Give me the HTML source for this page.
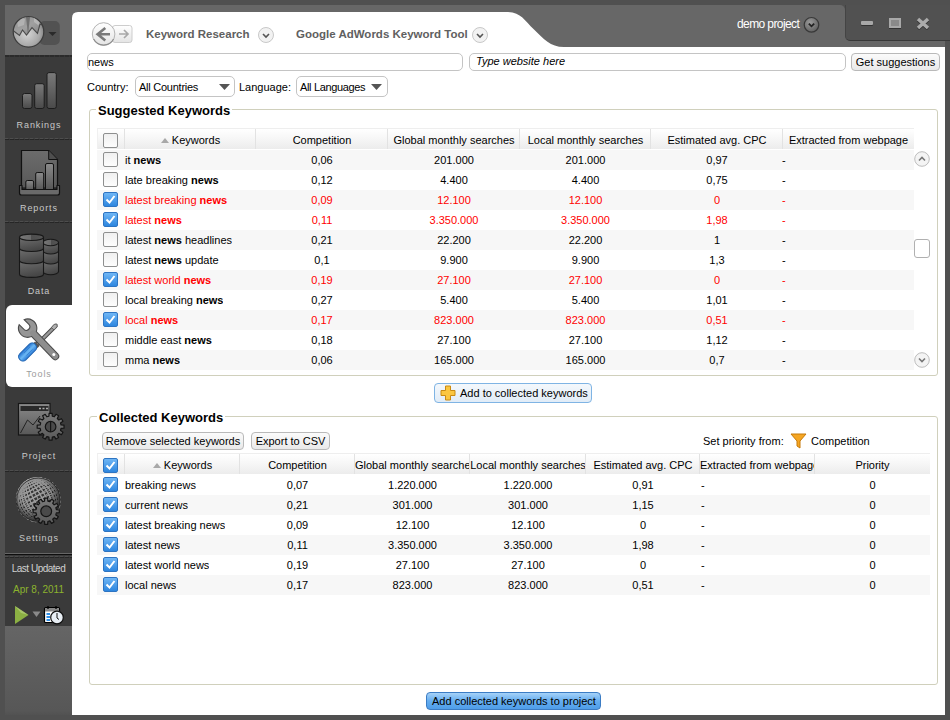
<!DOCTYPE html><html><head><meta charset="utf-8"><style>
*{box-sizing:border-box;margin:0;padding:0}
html,body{width:950px;height:720px;overflow:hidden;background:#505050;font-family:"Liberation Sans",sans-serif;font-size:11px;color:#000}
.abs{position:absolute}
.t{position:absolute;white-space:nowrap;line-height:13px}
.sb{position:absolute;left:5px;width:67px;color:#c8c8c8;font-size:9px;letter-spacing:0.9px;text-align:center;line-height:12px;white-space:nowrap;text-indent:0.9px}
.sep{position:absolute;left:5px;width:67px;height:1px;border-top:1px dashed #2a2a2a}
.inp{position:absolute;background:#fff;border:1px solid #c4c4c4;border-radius:5px}
.btn{position:absolute;border:1px solid #b9b9b9;border-radius:4px;background:linear-gradient(#fbfbfb,#e9e9e9);text-align:center;line-height:17px;white-space:nowrap}
.grp{position:absolute;border:1px solid #d0d0bc;border-radius:3px}
.gt{position:absolute;background:#fff;font-weight:bold;font-size:13px;line-height:15px;padding:0 2px 0 2px;white-space:nowrap}
.hdr{position:absolute;height:21px;background:linear-gradient(#ffffff 0%,#f6f6f6 50%,#ececec 100%);border-top:1px solid #eeeeee;border-left:1px solid #f0f0f0}
.hc{position:absolute;top:0;height:21px;line-height:21px;padding-top:2px;text-align:center;white-space:nowrap;overflow:hidden}
.hs{position:absolute;width:1px;height:20px;background:#e2e2e2}
.row{position:absolute;height:20px}
.g{background:#f7f7f7}
.c{position:absolute;top:0;line-height:20px;text-align:center;white-space:nowrap;overflow:hidden}
.r{color:#ff0000}
.cb{position:absolute;width:15px;height:15px;border:1px solid #8e8f8f;border-radius:2px;background:linear-gradient(#f0f0f0,#fdfdfd)}
.cbk{position:absolute;width:15px;height:15px;border-radius:2px;background:linear-gradient(#6fb6f5,#2d86df);border:1px solid #2d74c2}
</style></head><body>
<div class="abs" style="left:5px;top:5px;width:840px;height:42px;background:#676767;border-top-right-radius:5px"></div>
<div class="abs" style="left:838px;top:25px;width:107px;height:22px;background:#676767"></div>
<div class="abs" style="left:845px;top:0;width:105px;height:5px;background:#505050"></div>
<div class="abs" style="left:845px;top:5px;width:105px;height:36px;background:#515151;border-bottom-left-radius:5px;border-left:1px solid #444;border-bottom:1px solid #383838"></div>
<div class="abs" style="left:861px;top:21px;width:12px;height:4px;background:#a8a8a8;border-radius:1px;box-shadow:0 1px 0 #333"></div>
<div class="abs" style="left:889px;top:18px;width:12px;height:10px;background:#8a8a8a;border:2px solid #a8a8a8;box-shadow:0 1px 0 #333"></div>
<svg class="abs" style="left:916px;top:17px" width="14" height="13"><path d="M2 2 L12 11 M12 2 L2 11" stroke="#333" stroke-width="3.5" transform="translate(0,1)"/><path d="M2 2 L12 11 M12 2 L2 11" stroke="#ababab" stroke-width="3.5"/></svg>
<div class="t" style="left:737px;top:18px;color:#fff;font-size:12px;letter-spacing:-0.6px">demo project</div>
<svg class="abs" style="left:803px;top:16px" width="17" height="17"><defs><radialGradient id="dp" cx="0.4" cy="0.35" r="0.7"><stop offset="0" stop-color="#9a9a9a"/><stop offset="1" stop-color="#5e5e5e"/></radialGradient></defs><circle cx="8.5" cy="8.8" r="7.3" fill="url(#dp)" stroke="#383838" stroke-width="1.2"/><path d="M5.8 7.6 L8.5 10.3 L11.2 7.6" stroke="#222" stroke-width="1.8" fill="none"/></svg>
<div class="abs" style="left:5px;top:5px;width:67px;height:50px;background:#676767"></div>
<div class="abs" style="left:5px;top:55px;width:67px;height:571px;background:#3a3a3a"></div>
<div class="abs" style="left:5px;top:626px;width:67px;height:89px;background:linear-gradient(#656565,#575757 95%,#525252)"></div>
<div class="abs" style="left:5px;top:55px;width:67px;height:2px;background:repeating-linear-gradient(90deg,#2a2a2a 0 4px,#333 4px 5px)"></div>
<div class="abs" style="left:5px;top:138px;width:67px;height:1px;background:repeating-linear-gradient(90deg,#4e4e4e 0 3px,#404040 3px 5px)"></div>
<div class="abs" style="left:5px;top:139px;width:67px;height:1px;background:repeating-linear-gradient(90deg,#262626 0 4px,#333 4px 5px)"></div>
<div class="abs" style="left:5px;top:221px;width:67px;height:1px;background:repeating-linear-gradient(90deg,#4e4e4e 0 3px,#404040 3px 5px)"></div>
<div class="abs" style="left:5px;top:222px;width:67px;height:1px;background:repeating-linear-gradient(90deg,#262626 0 4px,#333 4px 5px)"></div>
<div class="abs" style="left:5px;top:470px;width:67px;height:1px;background:repeating-linear-gradient(90deg,#4e4e4e 0 3px,#404040 3px 5px)"></div>
<div class="abs" style="left:5px;top:471px;width:67px;height:1px;background:repeating-linear-gradient(90deg,#262626 0 4px,#333 4px 5px)"></div>
<div class="abs" style="left:5px;top:553px;width:67px;height:1px;background:#666"></div>
<div class="abs" style="left:5px;top:554px;width:67px;height:1px;background:#0e0e0e"></div>
<div class="abs" style="left:5px;top:555.5px;width:67px;height:1px;background:repeating-linear-gradient(90deg,#4e4e4e 0 3px,#404040 3px 5px)"></div>
<div class="abs" style="left:5px;top:556.5px;width:67px;height:1px;background:repeating-linear-gradient(90deg,#262626 0 4px,#333 4px 5px)"></div>
<svg class="abs" style="left:5px;top:5px" width="67" height="50"><defs><radialGradient id="gl" cx="0.45" cy="0.55" r="0.6"><stop offset="0" stop-color="#d6d6d6"/><stop offset="0.7" stop-color="#a8a8a8"/><stop offset="1" stop-color="#7a7a7a"/></radialGradient><linearGradient id="gtop" x1="0" y1="0" x2="1" y2="1"><stop offset="0" stop-color="#8a8a8a"/><stop offset="0.5" stop-color="#a0a0a0"/><stop offset="1" stop-color="#7c7c7c"/></linearGradient><clipPath id="gc"><circle cx="23.5" cy="26.8" r="15.2"/></clipPath></defs><rect x="34.5" y="16" width="20.3" height="24" rx="5" fill="#525252"/><path d="M43.5 27 H51.5 L47.5 31 Z" fill="#2a2a2a"/><circle cx="23.5" cy="26.8" r="15.3" fill="url(#gl)"/><g clip-path="url(#gc)"><path d="M6 10 H42 V22 L35 19 L32.5 28.5 L27 22.7 L21.5 30 L17.5 25 L14.5 30.5 L6 24 Z" fill="url(#gtop)"/><path d="M12 16 Q16 12 20 14 L19 20 L13 22 Z" fill="#b8b8b8" opacity="0.8"/><path d="M29 13 Q35 13 37 18 L33 20 L29 17 Z" fill="#bcbcbc" opacity="0.8"/><path d="M21 12 L23 30 L25 12 Z" fill="#5e5e5e" opacity="0.7"/><path d="M6 24 L14.5 30.5 L17.5 25 L21.5 30 L27 22.7 L32.5 28.5 L35 19 L42 22" stroke="#4a4a4a" stroke-width="1.1" fill="none"/></g><circle cx="23.5" cy="26.8" r="15.3" fill="none" stroke="#3c3c3c" stroke-width="1.2"/></svg>
<svg class="abs" style="left:5px;top:55px" width="67" height="83"><defs><linearGradient id="bar" x1="0" y1="0" x2="0" y2="1"><stop offset="0" stop-color="#7a7a7a"/><stop offset="1" stop-color="#4a4a4a"/></linearGradient></defs><rect x="17.5" y="38.5" width="9.5" height="15" rx="2" fill="url(#bar)" stroke="#1c1c1c"/><rect x="29.7" y="28.7" width="9.5" height="24.8" rx="2" fill="url(#bar)" stroke="#1c1c1c"/><rect x="42" y="17.6" width="9.3" height="35.9" rx="2" fill="url(#bar)" stroke="#1c1c1c"/></svg>
<div class="sb" style="top:118.7px">Rankings</div>
<svg class="abs" style="left:5px;top:138px" width="67" height="83"><defs><linearGradient id="doc" x1="0" y1="0" x2="0" y2="1"><stop offset="0" stop-color="#6c6c6c"/><stop offset="1" stop-color="#585858"/></linearGradient></defs><path d="M16.5 12.5 H43.7 L52.5 21.5 V50 H16.5 Z" fill="url(#doc)" stroke="#111" stroke-width="1.2"/><path d="M43.7 12.5 V21.5 H52.5" fill="#4e4e4e" stroke="#111" stroke-width="1"/><defs><linearGradient id="bar2" x1="0" y1="0" x2="0" y2="1"><stop offset="0" stop-color="#8a8a8a"/><stop offset="1" stop-color="#555"/></linearGradient></defs><rect x="20.8" y="42.5" width="7.8" height="10" rx="1.5" fill="url(#bar2)" stroke="#111"/><rect x="30.7" y="34.5" width="8" height="18" rx="1.5" fill="url(#bar2)" stroke="#111"/><rect x="40.5" y="25.5" width="8" height="27" rx="1.5" fill="url(#bar2)" stroke="#111"/><path d="M14.5 47.5 H17 V51.5 H52 V47.5 H54.5 V55 Q54.5 57 52.5 57 H16.5 Q14.5 57 14.5 55 Z" fill="#6a6a6a" stroke="#111" stroke-width="1.2" stroke-linejoin="round"/></svg>
<div class="sb" style="top:201.6px">Reports</div>
<svg class="abs" style="left:5px;top:221px" width="67" height="84"><defs><linearGradient id="seg" x1="0" y1="0" x2="0.3" y2="1"><stop offset="0" stop-color="#707070"/><stop offset="1" stop-color="#464646"/></linearGradient><linearGradient id="ctop" x1="0" y1="0" x2="1" y2="0"><stop offset="0" stop-color="#777"/><stop offset="0.5" stop-color="#6a6a6a"/><stop offset="0.5" stop-color="#4e4e4e"/><stop offset="1" stop-color="#555"/></linearGradient></defs><path d="M38 39.8 V50.5 A7.75 3.2 0 0 0 53.5 50.5 V39.8 Z" fill="url(#seg)" stroke="#181818" stroke-width="1.1"/><path d="M38 29.8 V39.8 A7.75 3.2 0 0 0 53.5 39.8 V29.8 Z" fill="url(#seg)" stroke="#181818" stroke-width="1.1"/><path d="M38 21.5 V29.8 A7.75 3.2 0 0 0 53.5 29.8 V21.5 Z" fill="url(#seg)" stroke="#181818" stroke-width="1.1"/><ellipse cx="45.75" cy="21.5" rx="7.75" ry="3.2" fill="url(#ctop)" stroke="#181818" stroke-width="1.1"/><path d="M14.5 39.5 V53.2 A12.0 3.2 0 0 0 38.5 53.2 V39.5 Z" fill="url(#seg)" stroke="#181818" stroke-width="1.1"/><path d="M14.5 27.3 V39.5 A12.0 3.2 0 0 0 38.5 39.5 V27.3 Z" fill="url(#seg)" stroke="#181818" stroke-width="1.1"/><path d="M14.5 16.3 V27.3 A12.0 3.2 0 0 0 38.5 27.3 V16.3 Z" fill="url(#seg)" stroke="#181818" stroke-width="1.1"/><ellipse cx="26.5" cy="16.3" rx="12.0" ry="3.2" fill="url(#ctop)" stroke="#181818" stroke-width="1.1"/></svg>
<div class="sb" style="top:284.8px">Data</div>
<div class="abs" style="left:6px;top:305px;width:66px;height:82px;background:#fff;border-radius:6px 0 0 6px"></div>
<svg class="abs" style="left:12px;top:312px" width="55" height="55"><defs><linearGradient id="blu" x1="0" y1="0" x2="1" y2="0"><stop offset="0" stop-color="#1f6fcf"/><stop offset="0.5" stop-color="#6cb8f4"/><stop offset="1" stop-color="#2a7ad6"/></linearGradient></defs><path d="M43.5 14 L25 32.5" stroke="#444" stroke-width="4.2" stroke-linecap="round"/><path d="M43.5 14 L25 32.5" stroke="#9a9a9a" stroke-width="2.4" stroke-linecap="round"/><path d="M39.5 15.5 Q42 11 45 12 Q46.5 14.5 42 18 Z" fill="#b0b0b0" stroke="#555" stroke-width="0.8"/><path d="M21.5 31 L26 35.5" stroke="#555" stroke-width="4.5"/><rect x="-4.3" y="-10.8" width="8.6" height="21.6" rx="4" transform="translate(15.6 40) rotate(45)" fill="url(#blu)" stroke="#2063b0" stroke-width="1"/><path d="M13.5 39.5 L19.5 33.5 M16 42 L22 36" stroke="#2a6fc0" stroke-width="0.8" opacity="0.7" transform="translate(-1.5 1.5)"/><path d="M20 20 L43.3 44.3" stroke="#4a4a4a" stroke-width="7.8" stroke-linecap="round"/><path d="M12.61 7.67 L17.41 12.47 A3.5 3.5 0 0 1 12.47 17.41 L7.67 12.61 A9.2 9.2 0 1 0 12.61 7.67 Z" fill="#969696" stroke="#4a4a4a" stroke-width="1.1" transform="translate(-0.5 0)"/><path d="M21 21 L43.3 44.3" stroke="#8e8e8e" stroke-width="5.8" stroke-linecap="round"/><circle cx="41.8" cy="42.6" r="1.5" fill="#fff"/></svg>
<div class="sb" style="top:367.9px;color:#9c9c9c">Tools</div>
<svg class="abs" style="left:12px;top:395px" width="55" height="55"><defs><linearGradient id="win" x1="0" y1="0" x2="0" y2="1"><stop offset="0" stop-color="#8a8a8a"/><stop offset="1" stop-color="#585858"/></linearGradient><linearGradient id="gearg" x1="0" y1="0" x2="0" y2="1"><stop offset="0" stop-color="#7a7a7a"/><stop offset="1" stop-color="#5a5a5a"/></linearGradient></defs><rect x="6.5" y="8.5" width="31.5" height="31.5" fill="url(#win)" stroke="#161616" stroke-width="1.2"/><rect x="8.5" y="11" width="28" height="5" fill="#2a2a2a"/><path d="M27 13.5 H29 M30.5 13.5 H32.5 M34 13.5 H36" stroke="#aaa" stroke-width="1.5"/><path d="M8.5 38 L15.5 25 L21 30 L28 21" stroke="#222" stroke-width="1" fill="none"/><path d="M49.06,29.99 L52.02,30.22 L52.02,33.18 L49.06,33.41 L48.52,35.45 L50.96,37.13 L49.48,39.69 L46.80,38.41 L45.31,39.90 L46.59,42.58 L44.03,44.06 L42.35,41.62 L40.31,42.16 L40.08,45.12 L37.12,45.12 L36.89,42.16 L34.85,41.62 L33.17,44.06 L30.61,42.58 L31.89,39.90 L30.40,38.41 L27.72,39.69 L26.24,37.13 L28.68,35.45 L28.14,33.41 L25.18,33.18 L25.18,30.22 L28.14,29.99 L28.68,27.95 L26.24,26.27 L27.72,23.71 L30.40,24.99 L31.89,23.50 L30.61,20.82 L33.17,19.34 L34.85,21.78 L36.89,21.24 L37.12,18.28 L40.08,18.28 L40.31,21.24 L42.35,21.78 L44.03,19.34 L46.59,20.82 L45.31,23.50 L46.80,24.99 L49.48,23.71 L50.96,26.27 L48.52,27.95 Z" fill="url(#gearg)" stroke="#141414" stroke-width="1.2" stroke-linejoin="round"/><circle cx="38.6" cy="31.7" r="5.3" fill="#4a4a4a" stroke="#141414" stroke-width="1.2"/><path d="M38.6 26.4 V37" stroke="#161616" stroke-width="1.2"/></svg>
<div class="sb" style="top:449.9px">Project</div>
<svg class="abs" style="left:10px;top:474px" width="56" height="56"><defs><radialGradient id="sph" cx="0.5" cy="0.4" r="0.6"><stop offset="0" stop-color="#3a3a3a"/><stop offset="1" stop-color="#2a2a2a"/></radialGradient><radialGradient id="shl" cx="0.42" cy="0.38" r="0.62"><stop offset="0" stop-color="#000" stop-opacity="0"/><stop offset="0.55" stop-color="#000" stop-opacity="0.1"/><stop offset="0.9" stop-color="#000" stop-opacity="0.6"/><stop offset="1" stop-color="#000" stop-opacity="0.75"/></radialGradient></defs><circle cx="28.4" cy="25.7" r="22" fill="url(#sph)"/><g transform="translate(28.4 25.7) rotate(-28)" fill="none" stroke="#a4a4a4" stroke-width="1.05"><ellipse cx="0" cy="0" rx="21.16" ry="22"/><ellipse cx="0" cy="0" rx="19.69" ry="22"/><ellipse cx="0" cy="0" rx="17.56" ry="22"/><ellipse cx="0" cy="0" rx="14.82" ry="22"/><ellipse cx="0" cy="0" rx="11.58" ry="22"/><ellipse cx="0" cy="0" rx="7.95" ry="22"/><ellipse cx="0" cy="0" rx="4.04" ry="22"/><path d="M0 -22 V22" /><ellipse cx="0" cy="0" rx="4.04" ry="22"/><ellipse cx="0" cy="0" rx="7.95" ry="22"/><ellipse cx="0" cy="0" rx="11.58" ry="22"/><ellipse cx="0" cy="0" rx="14.82" ry="22"/><ellipse cx="0" cy="0" rx="17.56" ry="22"/><ellipse cx="0" cy="0" rx="19.69" ry="22"/><ellipse cx="0" cy="0" rx="21.16" ry="22"/><ellipse cx="0" cy="-21.16" rx="6.02" ry="1.08"/><ellipse cx="0" cy="-19.69" rx="9.81" ry="1.77"/><ellipse cx="0" cy="-17.56" rx="13.26" ry="2.39"/><ellipse cx="0" cy="-14.82" rx="16.26" ry="2.93"/><ellipse cx="0" cy="-11.58" rx="18.70" ry="3.37"/><ellipse cx="0" cy="-7.95" rx="20.51" ry="3.69"/><ellipse cx="0" cy="-4.04" rx="21.63" ry="3.89"/><ellipse cx="0" cy="0.00" rx="22.00" ry="3.96"/><ellipse cx="0" cy="4.04" rx="21.63" ry="3.89"/><ellipse cx="0" cy="7.95" rx="20.51" ry="3.69"/><ellipse cx="0" cy="11.58" rx="18.70" ry="3.37"/><ellipse cx="0" cy="14.82" rx="16.26" ry="2.93"/><ellipse cx="0" cy="17.56" rx="13.26" ry="2.39"/><ellipse cx="0" cy="19.69" rx="9.81" ry="1.77"/><ellipse cx="0" cy="21.16" rx="6.02" ry="1.08"/></g><circle cx="28.4" cy="25.7" r="22" fill="url(#shl)"/><circle cx="28.4" cy="25.7" r="21.7" fill="none" stroke="#1e1e1e" stroke-width="0.8"/><path d="M46.36,35.64 L49.32,35.85 L49.32,38.75 L46.36,38.96 L45.84,40.94 L48.29,42.61 L46.84,45.11 L44.17,43.82 L42.72,45.27 L44.01,47.94 L41.51,49.39 L39.84,46.94 L37.86,47.46 L37.65,50.42 L34.75,50.42 L34.54,47.46 L32.56,46.94 L30.89,49.39 L28.39,47.94 L29.68,45.27 L28.23,43.82 L25.56,45.11 L24.11,42.61 L26.56,40.94 L26.04,38.96 L23.08,38.75 L23.08,35.85 L26.04,35.64 L26.56,33.66 L24.11,31.99 L25.56,29.49 L28.23,30.78 L29.68,29.33 L28.39,26.66 L30.89,25.21 L32.56,27.66 L34.54,27.14 L34.75,24.18 L37.65,24.18 L37.86,27.14 L39.84,27.66 L41.51,25.21 L44.01,26.66 L42.72,29.33 L44.17,30.78 L46.84,29.49 L48.29,31.99 L45.84,33.66 Z" fill="url(#gearg)" stroke="#141414" stroke-width="1.2" stroke-linejoin="round"/><circle cx="36.2" cy="37.3" r="5.4" fill="#4a4a4a" stroke="#141414" stroke-width="1.2"/></svg>
<div class="sb" style="top:532.1px">Settings</div>
<div class="t" style="left:5px;width:67px;top:562.5px;text-align:center;color:#d0d0d0;font-size:10px;line-height:12px;letter-spacing:-0.5px">Last Updated</div>
<div class="t" style="left:5px;width:67px;top:583.8px;text-align:center;color:#8cb32e;font-size:10px;line-height:12px;letter-spacing:0">Apr 8, 2011</div>
<svg class="abs" style="left:10px;top:600px" width="56" height="26"><path d="M5 6 L18.5 15 L5 24 Z" fill="#8bb043"/><path d="M5 6 L18.5 15 L11 13 Z" fill="#b5cf7a" opacity="0.7"/><path d="M22.5 11.5 H30.5 L26.5 17 Z" fill="#8a8a8a"/><rect x="34.5" y="7.5" width="15" height="15" rx="1" fill="#fff" stroke="#000" stroke-width="1.2"/><rect x="35" y="8" width="14" height="3.5" fill="#888"/><path d="M38 6 V9 M46 6 V9" stroke="#000" stroke-width="1.3"/><path d="M36.5 14 H40 M36.5 17 H40 M36.5 20 H40" stroke="#2f8fe6" stroke-width="1.8"/><circle cx="47" cy="17.5" r="6.3" fill="#e8eef4" stroke="#111" stroke-width="1.2"/><path d="M47 13 V18 L49 19.5" stroke="#111" stroke-width="1" fill="none"/></svg>
<div class="abs" style="left:72px;top:47px;width:873px;height:668px;background:#fff"></div>
<svg class="abs" style="left:72px;top:12px" width="500" height="36"><path d="M0 36 V6 Q0 0 6 0 H434 C449 0 452 8 462 17.5 C472 27 478 35 492 35 L502 35 L502 36 Z" fill="#fff"/></svg>
<svg class="abs" style="left:91px;top:20px" width="44" height="28"><defs><linearGradient id="bk" x1="0" y1="0" x2="0" y2="1"><stop offset="0" stop-color="#ffffff"/><stop offset="1" stop-color="#e4e4e4"/></linearGradient></defs><rect x="21.5" y="5.5" width="19.5" height="17" rx="2.5" fill="url(#bk)" stroke="#cdcdcd"/><path d="M28 14 H36.5 M33 10 L37 14 L33 18" stroke="#a8a8a8" stroke-width="1.7" fill="none"/><circle cx="12.6" cy="14" r="11.3" fill="url(#bk)" stroke="#b4b4b4"/><path d="M2.6 19 A11.3 11.3 0 0 0 22.6 19" stroke="#8e8e8e" stroke-width="1.2" fill="none"/><path d="M7 14.2 H19 M14.3 8 L6.6 14.2 L14.3 20.4" stroke="#7a7a7a" stroke-width="2.6" fill="none"/></svg>
<div class="t" style="left:146px;top:28px;color:#606060;font-weight:bold;font-size:11.5px">Keyword Research</div>
<div class="t" style="left:296px;top:28px;color:#606060;font-weight:bold;font-size:11.5px">Google AdWords Keyword Tool</div>
<svg class="abs" style="left:258px;top:27px" width="16" height="16"><circle cx="8" cy="8" r="7.5" fill="#f2f2f2" stroke="#c8c8c8"/><path d="M5 7 L8 10 L11 7" stroke="#555" stroke-width="1.6" fill="none"/></svg>
<svg class="abs" style="left:472px;top:27px" width="16" height="16"><circle cx="8" cy="8" r="7.5" fill="#f2f2f2" stroke="#c8c8c8"/><path d="M5 7 L8 10 L11 7" stroke="#555" stroke-width="1.6" fill="none"/></svg>
<div class="inp" style="left:87px;top:53px;width:376px;height:18px"></div>
<div class="t" style="left:88px;top:56px">news</div>
<div class="inp" style="left:469px;top:53px;width:377px;height:18px"></div>
<div class="t" style="left:476px;top:55px;font-style:italic">Type website here</div>
<div class="btn" style="left:851px;top:53px;width:89px;height:18px">Get suggestions</div>
<div class="t" style="left:87px;top:81px">Country:</div>
<div class="inp" style="left:135px;top:76px;width:100px;height:21px"></div>
<div class="t" style="left:139px;top:81px;letter-spacing:-0.25px">All Countries</div>
<svg class="abs" style="left:219px;top:84px" width="11" height="6"><path d="M0 0 H11 L5.5 6 Z" fill="#555"/></svg>
<div class="t" style="left:239px;top:81px">Language:</div>
<div class="inp" style="left:296px;top:76px;width:92px;height:21px"></div>
<div class="t" style="left:300px;top:81px;letter-spacing:-0.35px">All Languages</div>
<svg class="abs" style="left:371px;top:84px" width="11" height="6"><path d="M0 0 H11 L5.5 6 Z" fill="#555"/></svg>
<div class="grp" style="left:89px;top:109px;width:849px;height:267px"></div>
<div class="gt" style="left:96px;top:103px">Suggested Keywords</div>
<div class="hdr" style="left:97px;top:128px;width:817px"></div>
<div class="hs" style="left:124px;top:129px"></div>
<div class="hc" style="left:125px;top:128px;width:131px"><span style="display:inline-block;width:0;height:0;border-left:4px solid transparent;border-right:4px solid transparent;border-bottom:5px solid #a8a8a8;margin-right:3px;vertical-align:1px"></span>Keywords</div>
<div class="hs" style="left:255px;top:129px"></div>
<div class="hc" style="left:256px;top:128px;width:132px">Competition</div>
<div class="hs" style="left:387px;top:129px"></div>
<div class="hc" style="left:388px;top:128px;width:132px">Global monthly searches</div>
<div class="hs" style="left:519px;top:129px"></div>
<div class="hc" style="left:520px;top:128px;width:131px">Local monthly searches</div>
<div class="hs" style="left:650px;top:129px"></div>
<div class="hc" style="left:651px;top:128px;width:132px">Estimated avg. CPC</div>
<div class="hs" style="left:782px;top:129px"></div>
<div class="hc" style="left:783px;top:128px;width:131px">Extracted from webpage</div>
<div class="cb" style="left:103px;top:133px"></div>
<div class="row g" style="left:97px;top:150px;width:817px"><div class="c" style="left:28px;text-align:left">it <b>news</b></div><div class="c" style="left:159px;width:132px">0,06</div><div class="c" style="left:291px;width:132px">201.000</div><div class="c" style="left:423px;width:131px">201.000</div><div class="c" style="left:554px;width:132px">0,97</div><div class="c" style="left:685px;text-align:left">-</div></div>
<div class="cb" style="left:103px;top:152px"></div>
<div class="row" style="left:97px;top:170px;width:817px"><div class="c" style="left:28px;text-align:left">late breaking <b>news</b></div><div class="c" style="left:159px;width:132px">0,12</div><div class="c" style="left:291px;width:132px">4.400</div><div class="c" style="left:423px;width:131px">4.400</div><div class="c" style="left:554px;width:132px">0,75</div><div class="c" style="left:685px;text-align:left">-</div></div>
<div class="cb" style="left:103px;top:172px"></div>
<div class="row g r" style="left:97px;top:190px;width:817px"><div class="c" style="left:28px;text-align:left">latest breaking <b>news</b></div><div class="c" style="left:159px;width:132px">0,09</div><div class="c" style="left:291px;width:132px">12.100</div><div class="c" style="left:423px;width:131px">12.100</div><div class="c" style="left:554px;width:132px">0</div><div class="c" style="left:685px;text-align:left">-</div></div>
<div class="cbk" style="left:103px;top:192px"></div>
<svg class="abs" style="left:103px;top:192px" width="15" height="15"><path d="M3.5 7.5 L6.5 10.5 L11.5 4" stroke="#fff" stroke-width="2" fill="none"/></svg>
<div class="row r" style="left:97px;top:210px;width:817px"><div class="c" style="left:28px;text-align:left">latest <b>news</b></div><div class="c" style="left:159px;width:132px">0,11</div><div class="c" style="left:291px;width:132px">3.350.000</div><div class="c" style="left:423px;width:131px">3.350.000</div><div class="c" style="left:554px;width:132px">1,98</div><div class="c" style="left:685px;text-align:left">-</div></div>
<div class="cbk" style="left:103px;top:212px"></div>
<svg class="abs" style="left:103px;top:212px" width="15" height="15"><path d="M3.5 7.5 L6.5 10.5 L11.5 4" stroke="#fff" stroke-width="2" fill="none"/></svg>
<div class="row g" style="left:97px;top:230px;width:817px"><div class="c" style="left:28px;text-align:left">latest <b>news</b> headlines</div><div class="c" style="left:159px;width:132px">0,21</div><div class="c" style="left:291px;width:132px">22.200</div><div class="c" style="left:423px;width:131px">22.200</div><div class="c" style="left:554px;width:132px">1</div><div class="c" style="left:685px;text-align:left">-</div></div>
<div class="cb" style="left:103px;top:232px"></div>
<div class="row" style="left:97px;top:250px;width:817px"><div class="c" style="left:28px;text-align:left">latest <b>news</b> update</div><div class="c" style="left:159px;width:132px">0,1</div><div class="c" style="left:291px;width:132px">9.900</div><div class="c" style="left:423px;width:131px">9.900</div><div class="c" style="left:554px;width:132px">1,3</div><div class="c" style="left:685px;text-align:left">-</div></div>
<div class="cb" style="left:103px;top:252px"></div>
<div class="row g r" style="left:97px;top:270px;width:817px"><div class="c" style="left:28px;text-align:left">latest world <b>news</b></div><div class="c" style="left:159px;width:132px">0,19</div><div class="c" style="left:291px;width:132px">27.100</div><div class="c" style="left:423px;width:131px">27.100</div><div class="c" style="left:554px;width:132px">0</div><div class="c" style="left:685px;text-align:left">-</div></div>
<div class="cbk" style="left:103px;top:272px"></div>
<svg class="abs" style="left:103px;top:272px" width="15" height="15"><path d="M3.5 7.5 L6.5 10.5 L11.5 4" stroke="#fff" stroke-width="2" fill="none"/></svg>
<div class="row" style="left:97px;top:290px;width:817px"><div class="c" style="left:28px;text-align:left">local breaking <b>news</b></div><div class="c" style="left:159px;width:132px">0,27</div><div class="c" style="left:291px;width:132px">5.400</div><div class="c" style="left:423px;width:131px">5.400</div><div class="c" style="left:554px;width:132px">1,01</div><div class="c" style="left:685px;text-align:left">-</div></div>
<div class="cb" style="left:103px;top:292px"></div>
<div class="row g r" style="left:97px;top:310px;width:817px"><div class="c" style="left:28px;text-align:left">local <b>news</b></div><div class="c" style="left:159px;width:132px">0,17</div><div class="c" style="left:291px;width:132px">823.000</div><div class="c" style="left:423px;width:131px">823.000</div><div class="c" style="left:554px;width:132px">0,51</div><div class="c" style="left:685px;text-align:left">-</div></div>
<div class="cbk" style="left:103px;top:312px"></div>
<svg class="abs" style="left:103px;top:312px" width="15" height="15"><path d="M3.5 7.5 L6.5 10.5 L11.5 4" stroke="#fff" stroke-width="2" fill="none"/></svg>
<div class="row" style="left:97px;top:330px;width:817px"><div class="c" style="left:28px;text-align:left">middle east <b>news</b></div><div class="c" style="left:159px;width:132px">0,18</div><div class="c" style="left:291px;width:132px">27.100</div><div class="c" style="left:423px;width:131px">27.100</div><div class="c" style="left:554px;width:132px">1,12</div><div class="c" style="left:685px;text-align:left">-</div></div>
<div class="cb" style="left:103px;top:332px"></div>
<div class="row g" style="left:97px;top:350px;width:817px"><div class="c" style="left:28px;text-align:left">mma <b>news</b></div><div class="c" style="left:159px;width:132px">0,06</div><div class="c" style="left:291px;width:132px">165.000</div><div class="c" style="left:423px;width:131px">165.000</div><div class="c" style="left:554px;width:132px">0,7</div><div class="c" style="left:685px;text-align:left">-</div></div>
<div class="cb" style="left:103px;top:352px"></div>
<svg class="abs" style="left:914px;top:151px" width="16" height="16"><circle cx="8" cy="8" r="7.3" fill="#f4f4f4" stroke="#bdbdbd"/><path d="M5 9.5 L8 6.5 L11 9.5" stroke="#777" stroke-width="1.6" fill="none"/></svg>
<div class="abs" style="left:914px;top:239px;width:16px;height:19px;border:1px solid #b0b0b0;border-radius:3px;background:#fff"></div>
<svg class="abs" style="left:914px;top:352px" width="16" height="16"><circle cx="8" cy="8" r="7.3" fill="#f4f4f4" stroke="#bdbdbd"/><path d="M5 6.5 L8 9.5 L11 6.5" stroke="#777" stroke-width="1.6" fill="none"/></svg>
<div class="abs" style="left:434px;top:383px;width:158px;height:20px;border:1px solid #7fb4e4;border-radius:4px;background:linear-gradient(#f4f8fc,#e1ecf7)"></div>
<svg class="abs" style="left:440px;top:385px" width="17" height="17"><path d="M5.5 1 H10.5 V5.5 H15 V10.5 H10.5 V15 H5.5 V10.5 H1 V5.5 H5.5 Z" fill="#fbc640" stroke="#c98a12" stroke-width="1"/></svg>
<div class="t" style="left:460px;top:387px">Add to collected keywords</div>
<div class="grp" style="left:89px;top:416px;width:849px;height:269px"></div>
<div class="gt" style="left:97px;top:410px">Collected Keywords</div>
<div class="btn" style="left:102px;top:432px;width:142px;height:18px">Remove selected keywords</div>
<div class="btn" style="left:251px;top:432px;width:79px;height:18px">Export to CSV</div>
<div class="t" style="left:703px;top:435px">Set priority from:</div>
<svg class="abs" style="left:790px;top:433px" width="17" height="16"><path d="M1 1 H16 L10 8 V15 L7 13 V8 Z" fill="#f5a623" stroke="#c77a0a"/></svg>
<div class="t" style="left:811px;top:435px">Competition</div>
<div class="hdr" style="left:97px;top:453px;width:833px"></div>
<div class="hs" style="left:124px;top:454px"></div>
<div class="hc" style="left:125px;top:453px;width:115px"><span style="display:inline-block;width:0;height:0;border-left:4px solid transparent;border-right:4px solid transparent;border-bottom:5px solid #a8a8a8;margin-right:3px;vertical-align:1px"></span>Keywords</div>
<div class="hs" style="left:239px;top:454px"></div>
<div class="hc" style="left:240px;top:453px;width:115px">Competition</div>
<div class="hs" style="left:354px;top:454px"></div>
<div class="hc" style="left:355px;top:453px;width:115px">Global monthly searches</div>
<div class="hs" style="left:469px;top:454px"></div>
<div class="hc" style="left:470px;top:453px;width:116px">Local monthly searches</div>
<div class="hs" style="left:585px;top:454px"></div>
<div class="hc" style="left:586px;top:453px;width:114px">Estimated avg. CPC</div>
<div class="hs" style="left:699px;top:454px"></div>
<div class="hc" style="left:700px;top:453px;width:115px">Extracted from webpage</div>
<div class="hs" style="left:814px;top:454px"></div>
<div class="hc" style="left:815px;top:453px;width:115px">Priority</div>
<div class="cbk" style="left:103px;top:458px"></div>
<svg class="abs" style="left:103px;top:458px" width="15" height="15"><path d="M3.5 7.5 L6.5 10.5 L11.5 4" stroke="#fff" stroke-width="2" fill="none"/></svg>
<div class="row" style="left:97px;top:475px;width:833px"><div class="c" style="left:28px;text-align:left">breaking news</div><div class="c" style="left:143px;width:115px">0,07</div><div class="c" style="left:258px;width:115px">1.220.000</div><div class="c" style="left:373px;width:116px">1.220.000</div><div class="c" style="left:489px;width:114px">0,91</div><div class="c" style="left:604px;text-align:left">-</div><div class="c" style="left:718px;width:115px">0</div></div>
<div class="cbk" style="left:103px;top:477px"></div>
<svg class="abs" style="left:103px;top:477px" width="15" height="15"><path d="M3.5 7.5 L6.5 10.5 L11.5 4" stroke="#fff" stroke-width="2" fill="none"/></svg>
<div class="row g" style="left:97px;top:495px;width:833px"><div class="c" style="left:28px;text-align:left">current news</div><div class="c" style="left:143px;width:115px">0,21</div><div class="c" style="left:258px;width:115px">301.000</div><div class="c" style="left:373px;width:116px">301.000</div><div class="c" style="left:489px;width:114px">1,15</div><div class="c" style="left:604px;text-align:left">-</div><div class="c" style="left:718px;width:115px">0</div></div>
<div class="cbk" style="left:103px;top:497px"></div>
<svg class="abs" style="left:103px;top:497px" width="15" height="15"><path d="M3.5 7.5 L6.5 10.5 L11.5 4" stroke="#fff" stroke-width="2" fill="none"/></svg>
<div class="row" style="left:97px;top:515px;width:833px"><div class="c" style="left:28px;text-align:left">latest breaking news</div><div class="c" style="left:143px;width:115px">0,09</div><div class="c" style="left:258px;width:115px">12.100</div><div class="c" style="left:373px;width:116px">12.100</div><div class="c" style="left:489px;width:114px">0</div><div class="c" style="left:604px;text-align:left">-</div><div class="c" style="left:718px;width:115px">0</div></div>
<div class="cbk" style="left:103px;top:517px"></div>
<svg class="abs" style="left:103px;top:517px" width="15" height="15"><path d="M3.5 7.5 L6.5 10.5 L11.5 4" stroke="#fff" stroke-width="2" fill="none"/></svg>
<div class="row g" style="left:97px;top:535px;width:833px"><div class="c" style="left:28px;text-align:left">latest news</div><div class="c" style="left:143px;width:115px">0,11</div><div class="c" style="left:258px;width:115px">3.350.000</div><div class="c" style="left:373px;width:116px">3.350.000</div><div class="c" style="left:489px;width:114px">1,98</div><div class="c" style="left:604px;text-align:left">-</div><div class="c" style="left:718px;width:115px">0</div></div>
<div class="cbk" style="left:103px;top:537px"></div>
<svg class="abs" style="left:103px;top:537px" width="15" height="15"><path d="M3.5 7.5 L6.5 10.5 L11.5 4" stroke="#fff" stroke-width="2" fill="none"/></svg>
<div class="row" style="left:97px;top:555px;width:833px"><div class="c" style="left:28px;text-align:left">latest world news</div><div class="c" style="left:143px;width:115px">0,19</div><div class="c" style="left:258px;width:115px">27.100</div><div class="c" style="left:373px;width:116px">27.100</div><div class="c" style="left:489px;width:114px">0</div><div class="c" style="left:604px;text-align:left">-</div><div class="c" style="left:718px;width:115px">0</div></div>
<div class="cbk" style="left:103px;top:557px"></div>
<svg class="abs" style="left:103px;top:557px" width="15" height="15"><path d="M3.5 7.5 L6.5 10.5 L11.5 4" stroke="#fff" stroke-width="2" fill="none"/></svg>
<div class="row g" style="left:97px;top:575px;width:833px"><div class="c" style="left:28px;text-align:left">local news</div><div class="c" style="left:143px;width:115px">0,17</div><div class="c" style="left:258px;width:115px">823.000</div><div class="c" style="left:373px;width:116px">823.000</div><div class="c" style="left:489px;width:114px">0,51</div><div class="c" style="left:604px;text-align:left">-</div><div class="c" style="left:718px;width:115px">0</div></div>
<div class="cbk" style="left:103px;top:577px"></div>
<svg class="abs" style="left:103px;top:577px" width="15" height="15"><path d="M3.5 7.5 L6.5 10.5 L11.5 4" stroke="#fff" stroke-width="2" fill="none"/></svg>
<div class="abs" style="left:426px;top:692px;width:175px;height:18px;border:1px solid #3b7cc4;border-radius:4px;background:linear-gradient(#a6d2f8,#64adf0 50%,#4f9de8)"></div>
<div class="t" style="left:432px;top:695px">Add collected keywords to project</div>
</body></html>
